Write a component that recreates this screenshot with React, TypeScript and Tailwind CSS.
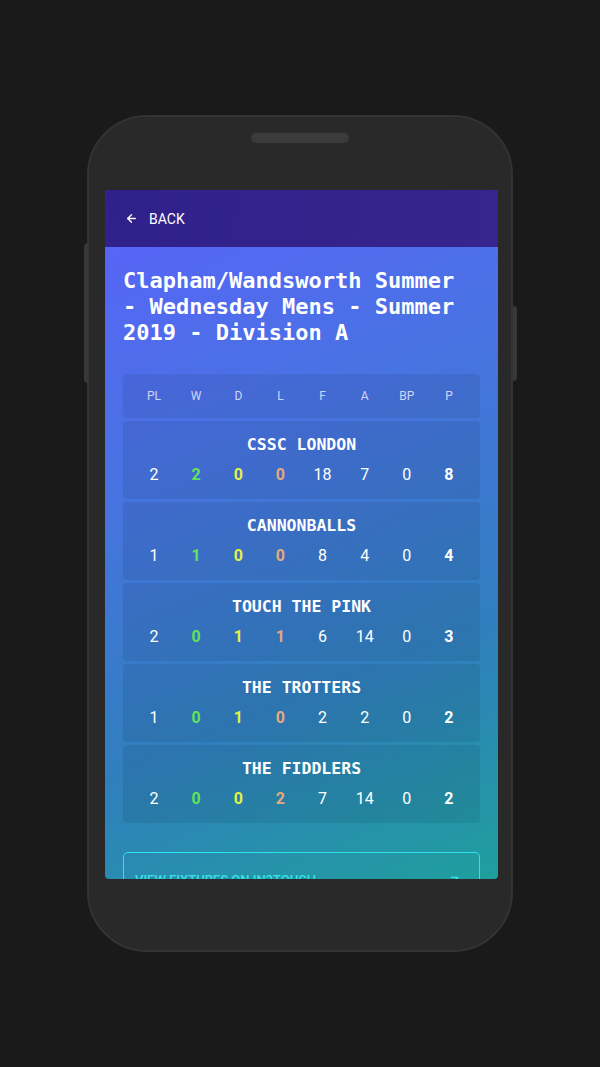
import { ArrowLeft, ArrowUpRight } from "lucide-react";

const columns = ["PL", "W", "D", "L", "F", "A", "BP", "P"];

const teams = [
  { name: "CSSC LONDON", stats: [2, 2, 0, 0, 18, 7, 0, 8] },
  { name: "CANNONBALLS", stats: [1, 1, 0, 0, 8, 4, 0, 4] },
  { name: "TOUCH THE PINK", stats: [2, 0, 1, 1, 6, 14, 0, 3] },
  { name: "THE TROTTERS", stats: [1, 0, 1, 0, 2, 2, 0, 2] },
  { name: "THE FIDDLERS", stats: [2, 0, 0, 2, 7, 14, 0, 2] },
];

// per-column text styling for the stat row
const statClass = [
  "text-white",
  "text-[#62e25a] font-bold",
  "text-[#e2f247] font-bold",
  "text-[#e4a97c] font-bold",
  "text-white",
  "text-white",
  "text-white",
  "text-white font-bold",
];

const mono = "font-['DejaVu_Sans_Mono',monospace]";
const sans = "font-['Roboto','Liberation_Sans',sans-serif]";

export default function App() {
  return (
    <div className="min-h-[1067px] w-full bg-[#1a1a1a] pt-[115px]">
      <div className="relative mx-auto h-[837px] w-[426px] rounded-[60px] border-2 border-[#333333] bg-[#292929]">
        {/* side buttons */}
        <div className="absolute -left-[5px] top-[126px] h-[140px] w-[4px] rounded-l-sm bg-[#383838]" />
        <div className="absolute -right-[6px] top-[189px] h-[75px] w-[4px] rounded-r-sm bg-[#383838]" />

        {/* speaker */}
        <div className="mx-auto mt-[16px] h-[10px] w-[98px] rounded-full bg-[#3b3b3b]" />

        {/* screen */}
        <div className="ml-[16px] mt-[47px] h-[689px] w-[393px] overflow-hidden rounded-[4px] bg-[linear-gradient(158deg,#5a62fb_0%,#4873e2_35%,#307fbd_70%,#1f9f9d_100%)]">
          <div className="flex h-[57px] items-center gap-[11px] bg-[linear-gradient(100deg,#30208a_0%,#36258c_100%)] pl-[20px] text-white">
            <ArrowLeft size={13} strokeWidth={2.5} />
            <span className={`${sans} mt-[1px] text-[14px]`}>BACK</span>
          </div>

          <div className="px-[18px] pt-[21px]">
            <h1 className={`${mono} text-[22px] font-bold leading-[26px] text-white`}>
              Clapham/Wandsworth Summer - Wednesday Mens - Summer 2019 - Division A
            </h1>

            <div className="mt-[28px] flex flex-col gap-[3px]">
              <div className="grid h-[44px] grid-cols-8 items-center rounded-[4px] bg-black/[0.07] px-[10px]">
                {columns.map((c) => (
                  <span key={c} className={`${sans} text-center text-[12px] text-[#cfd6f8]`}>
                    {c}
                  </span>
                ))}
              </div>

              {teams.map((team) => (
                <div
                  key={team.name}
                  className="flex h-[78px] flex-col gap-[10px] rounded-[4px] bg-black/[0.08] px-[10px] pt-[14px]"
                >
                  <div className={`${mono} text-center text-[16.5px] font-bold leading-[20px] text-white`}>
                    {team.name}
                  </div>
                  <div className="grid grid-cols-8">
                    {team.stats.map((s, i) => (
                      <span
                        key={i}
                        className={`${sans} text-center text-[16px] leading-[20px] ${statClass[i]}`}
                      >
                        {s}
                      </span>
                    ))}
                  </div>
                </div>
              ))}
            </div>

            <div className="mt-[29px] flex h-[56px] items-center justify-between rounded-[5px] border border-[#2fe2ea] px-[11px] text-[#35e2e8]">
              <span className={`${sans} text-[13px] font-medium`}>VIEW FIXTURES ON IN2TOUCH</span>
              <ArrowUpRight size={15} strokeWidth={2} className="mr-[6px]" />
            </div>
          </div>
        </div>
      </div>
    </div>
  );
}
